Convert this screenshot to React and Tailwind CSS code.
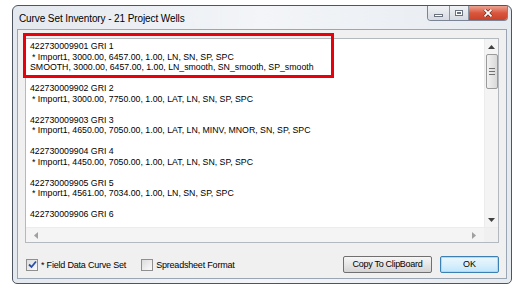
import React from "react";

const wells = [
  {
    name: "422730009901 GRI 1",
    lines: [
      "* Import1, 3000.00, 6457.00, 1.00, LN, SN, SP, SPC",
      "SMOOTH, 3000.00, 6457.00, 1.00, LN_smooth, SN_smooth, SP_smooth",
    ],
  },
  { name: "422730009902 GRI 2", lines: ["* Import1, 3000.00, 7750.00, 1.00, LAT, LN, SN, SP, SPC"] },
  { name: "422730009903 GRI 3", lines: ["* Import1, 4650.00, 7050.00, 1.00, LAT, LN, MINV, MNOR, SN, SP, SPC"] },
  { name: "422730009904 GRI 4", lines: ["* Import1, 4450.00, 7050.00, 1.00, LAT, LN, SN, SP, SPC"] },
  { name: "422730009905 GRI 5", lines: ["* Import1, 4561.00, 7034.00, 1.00, LN, SN, SP, SPC"] },
  { name: "422730009906 GRI 6", lines: [] },
];

const Arrow = ({ dir }) => {
  const pts = {
    up: "0,4 3.5,0 7,4",
    down: "0,0 3.5,4 7,0",
    left: "4,0 0,3.5 4,7",
    right: "0,0 4,3.5 0,7",
  }[dir];
  const vertical = dir === "up" || dir === "down";
  return (
    <svg width={vertical ? 7 : 4} height={vertical ? 4 : 7} viewBox={vertical ? "0 0 7 4" : "0 0 4 7"}>
      <polygon points={pts} fill={dir === "left" || dir === "right" ? "#a0a0a0" : "#404040"} />
    </svg>
  );
};

const Checkbox = ({ checked }) => (
  <div className="w-[12px] h-[12px] border border-[#8f8f8f] bg-gradient-to-br from-[#dcdcdc] to-[#fbfbfb] flex items-center justify-center">
    {checked && (
      <svg width="9" height="9" viewBox="0 0 9 9">
        <path d="M1 4.5 L3.5 7 L8 1.5" stroke="#2a4fa8" strokeWidth="1.8" fill="none" />
      </svg>
    )}
  </div>
);

export default function App() {
  return (
    <div
      className="w-[520px] h-[290px] bg-white pt-[5px] pl-[12px] text-black"
      style={{ fontFamily: '"Liberation Sans", Arial, sans-serif' }}
    >
      {/* window */}
      <div className="w-[500px] h-[279px] rounded-t-[6px] rounded-b-[5px] border border-[#4f5560] bg-gradient-to-r from-[#e4e9ef] via-[#f3f5f8] to-[#e6ebf0] flex flex-col px-[4px] pb-[4px]">
        {/* title bar */}
        <div className="h-[23px] flex justify-between">
          <div className="pl-[2px] pt-[7px] text-[10px] leading-[12px] tracking-[-0.1px]">Curve Set Inventory - 21 Project Wells</div>
          <div className="flex h-[15px] mr-[-1px] border border-t-0 border-[#7a8494] rounded-b-[4px] overflow-hidden">
            <div className="w-[22px] bg-gradient-to-b from-[#f0f2f5] to-[#d6dbe2] border-r border-[#8a93a0] flex items-center justify-center">
              <div className="w-[9px] h-[3px] border border-[#6a7280] bg-white mt-[4px]" />
            </div>
            <div className="w-[19px] bg-gradient-to-b from-[#f0f2f5] to-[#d6dbe2] border-r border-[#8a93a0] flex items-center justify-center">
              <div className="w-[8px] h-[6px] border border-[#6a7280] bg-white flex items-center justify-center">
                <div className="w-[4px] h-[2px] border border-[#6a7280]" />
              </div>
            </div>
            <div className="w-[38px] bg-gradient-to-b from-[#eba291] via-[#d9553b] to-[#c9432a] flex items-center justify-center">
              <svg width="10" height="8" viewBox="0 0 10 8">
                <path d="M1.5 0.5 L8.5 7.5 M8.5 0.5 L1.5 7.5" stroke="#5a1a10" strokeWidth="3" />
                <path d="M1.5 0.5 L8.5 7.5 M8.5 0.5 L1.5 7.5" stroke="#ffffff" strokeWidth="1.8" />
              </svg>
            </div>
          </div>
        </div>

        {/* client area */}
        <div className="flex-1 border border-[#9aa6b4] bg-[#f0f0f0] flex flex-col pt-[8px] px-[7px]">
          {/* list box */}
          <div className="relative h-[205px] border border-[#b4b8bf] bg-white flex flex-col">
            <div className="flex-1 flex min-h-0">
              <div className="flex-1 overflow-hidden pl-[4px] pt-[2px] text-[8.75px] leading-[10.5px] whitespace-nowrap">
                {wells.map((w) => (
                  <div key={w.name} className="mb-[10.5px]">
                    <div>{w.name}</div>
                    {w.lines.map((l) => (
                      <div key={l} className={l.startsWith("*") ? "pl-[2px]" : ""}>
                        {l}
                      </div>
                    ))}
                  </div>
                ))}
              </div>
              {/* vertical scrollbar */}
              <div className="w-[14px] bg-[#f4f4f4] border-l border-[#ececec] flex flex-col items-center">
                <div className="h-[15px] flex items-center justify-center">
                  <Arrow dir="up" />
                </div>
                <div className="w-[12px] h-[35px] border border-[#9a9a9a] rounded-[2px] bg-gradient-to-r from-[#f2f2f2] to-[#d9d9d9] flex flex-col items-center justify-center gap-[2px]">
                  <div className="w-[6px] h-px bg-[#707070]" />
                  <div className="w-[6px] h-px bg-[#707070]" />
                  <div className="w-[6px] h-px bg-[#707070]" />
                </div>
                <div className="flex-1" />
                <div className="h-[15px] flex items-center justify-center">
                  <Arrow dir="down" />
                </div>
              </div>
            </div>
            {/* horizontal scrollbar */}
            <div className="h-[15px] flex bg-[#f4f4f4] border-t border-[#ececec]">
              <div className="flex-1 flex items-center justify-between px-[8px]">
                <Arrow dir="left" />
                <Arrow dir="right" />
              </div>
              <div className="w-[14px] bg-[#f0f0f0]" />
            </div>

            {/* highlight annotation */}
            <div className="absolute left-[-3px] top-[-6px] w-[311px] h-[45px] border-[3px] border-[#e8000b]" />
          </div>

          {/* bottom row */}
          <div className="flex items-center mt-[13px]">
            <div className="flex items-center pl-[1px]">
              <Checkbox checked />
              <span className="ml-[3px] text-[9px] leading-[12px] tracking-[-0.2px]">* Field Data Curve Set</span>
            </div>
            <div className="flex items-center ml-[15px]">
              <Checkbox />
              <span className="ml-[3px] text-[9px] leading-[12px] tracking-[-0.2px]">Spreadsheet Format</span>
            </div>
            <div className="flex-1" />
            <button className="w-[89px] h-[17px] border border-[#707070] rounded-[2px] bg-gradient-to-b from-[#f6f6f6] via-[#e6e6e6] to-[#d4d4d4] text-[9px] tracking-[-0.3px] leading-none">
              Copy To ClipBoard
            </button>
            <button className="ml-[8px] w-[59px] h-[17px] border border-[#3c7fb1] rounded-[2px] bg-gradient-to-b from-[#eaf6fd] via-[#d9f0fc] to-[#bee6fd] shadow-[inset_0_0_0_1px_#9ce2fc] text-[9px] leading-none">
              OK
            </button>
          </div>
        </div>
      </div>
    </div>
  );
}
